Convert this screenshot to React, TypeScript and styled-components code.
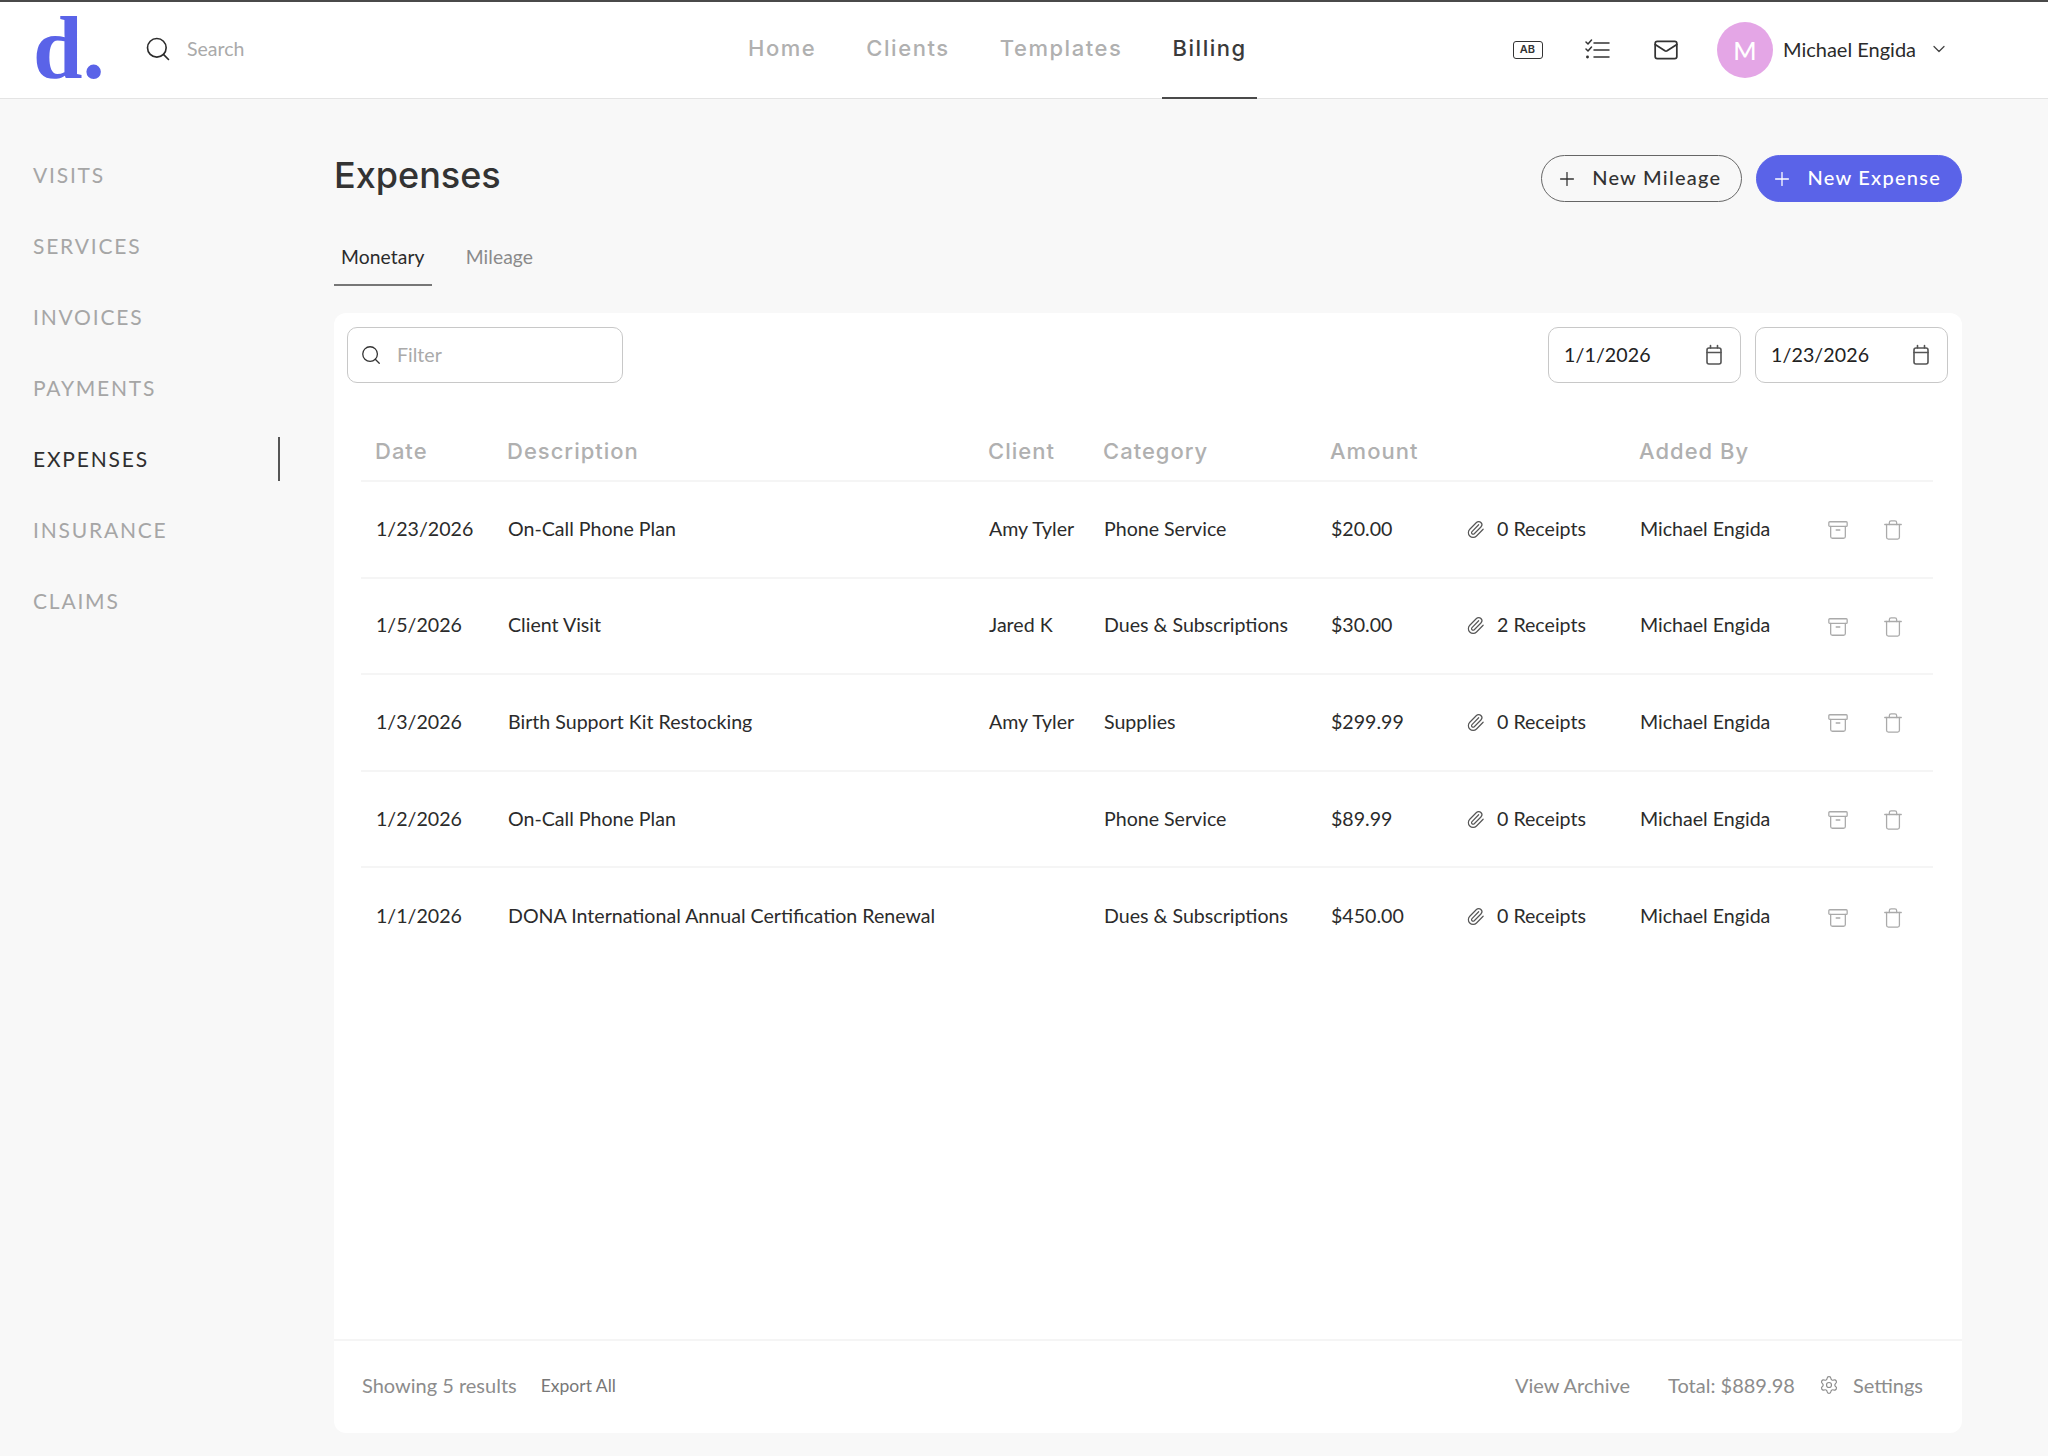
import React from 'react';
import styled, { createGlobalStyle } from 'styled-components';
import { Archive, ChevronDown, Mail, Paperclip, Plus, Search, Settings, Trash } from 'lucide-react';

const GlobalStyle = createGlobalStyle`
  * { box-sizing: border-box; }
  html, body { margin: 0; padding: 0; background: #f8f8f8; }
  body { font-family: 'Lato', 'Liberation Sans', sans-serif; color: #2b2b2b; }
`;

const Page = styled.div`
  width: 2048px;
  height: 1456px;
  display: flex;
  flex-direction: column;
  overflow: hidden;
`;

const Header = styled.header`
  height: 99px;
  flex: none;
  display: flex;
  align-items: stretch;
  background: #fff;
  border-top: 2px solid #4a4a4a;
  border-bottom: 1px solid #e4e4e4;
`;

const Logo = styled.div`
  width: 144px;
  padding: 0 0 0 33px;
  font-family: 'Liberation Serif', serif;
  font-weight: 700;
  font-size: 89px;
  line-height: 92px;
  letter-spacing: 0;
  color: #5a63e8;
`;

const SearchBox = styled.div`
  width: 594px;
  display: flex;
  align-items: center;
  gap: 15px;
  padding-bottom: 3px;
  color: #aaa;
  font-size: 19.5px;
  svg { color: #2b2b2b; }
`;

const Nav = styled.nav`
  display: flex;
  width: 755px;
`;

const NavLink = styled.a<{ $active?: boolean }>`
  display: flex;
  align-items: center;
  padding: 0 10px 4px;
  margin-right: 30px;
  margin-bottom: -1px;
  font-family: 'Inter', sans-serif;
  font-size: 22px;
  font-weight: 500;
  letter-spacing: 1.55px;
  color: ${(p) => (p.$active ? '#3a3a3a' : '#b0b0b0')};
  border-bottom: 2px solid ${(p) => (p.$active ? '#4a4a4a' : 'transparent')};
`;

const HeaderTools = styled.div`
  display: flex;
  align-items: center;
  flex: 1;
  color: #333;
`;

const ToolIcon = styled.span`
  width: 69px;
  display: flex;
  justify-content: center;
`;

const AbBadge = styled.span`
  width: 30px;
  height: 18px;
  border: 1.5px solid #333;
  border-radius: 3px;
  font-family: 'Inter', sans-serif;
  font-size: 11px;
  font-weight: 600;
  line-height: 15px;
  text-align: center;
`;

const Avatar = styled.span`
  width: 56px;
  height: 56px;
  margin-left: 17px;
  border-radius: 50%;
  background: #e4a6e6;
  color: #fff;
  font-size: 25px;
  font-weight: 500;
  display: flex;
  align-items: center;
  justify-content: center;
`;

const UserName = styled.span`
  margin-left: 10px;
  padding-bottom: 3px;
  font-size: 20px;
  color: #2b2b2b;
`;

const UserCaret = styled(ChevronDown)`
  margin-left: 13px;
  margin-bottom: 2px;
  color: #444;
`;

const Body = styled.div`
  flex: 1;
  display: flex;
`;

const Sidebar = styled.aside`
  width: 334px;
  flex: none;
  padding-top: 40px;
`;

const SideItem = styled.a<{ $active?: boolean }>`
  position: relative;
  display: flex;
  align-items: center;
  height: 71px;
  padding-left: 33px;
  font-size: 21px;
  letter-spacing: 1.8px;
  color: ${(p) => (p.$active ? '#2f2f2f' : '#a6a6a6')};
  &::after {
    content: '';
    display: ${(p) => (p.$active ? 'block' : 'none')};
    position: absolute;
    left: 278px;
    top: 14px;
    width: 2px;
    height: 44px;
    background: #555;
  }
`;

const Main = styled.main`
  width: 1628px;
  padding-top: 56px;
  display: flex;
  flex-direction: column;
`;

const TitleRow = styled.div`
  display: flex;
  align-items: center;
  height: 47px;
  gap: 14px;
`;

const Title = styled.h1`
  margin: 0 auto 8px 0;
  font-family: 'Inter', sans-serif;
  font-size: 36px;
  font-weight: 500;
  color: #333;
`;

const PillButton = styled.button<{ $primary?: boolean }>`
  height: 47px;
  display: flex;
  align-items: center;
  gap: 14px;
  padding: 0 20px 3px 14px;
  border-radius: 24px;
  border: 1px solid ${(p) => (p.$primary ? '#5a63e8' : '#666')};
  background: ${(p) => (p.$primary ? '#5a63e8' : 'transparent')};
  color: ${(p) => (p.$primary ? '#fff' : '#333')};
  font-family: inherit;
  font-size: 20px;
  font-weight: 500;
  letter-spacing: 1.25px;
  svg { margin-top: 3px; }
`;

const Tabs = styled.div`
  display: flex;
  height: 84px;
  padding-top: 32px;
`;

const Tab = styled.a<{ $active?: boolean }>`
  height: 52px;
  padding: 11px 7px 0;
  margin-right: 27px;
  font-size: 19.3px;
  letter-spacing: 0.1px;
  color: ${(p) => (p.$active ? '#2b2b2b' : '#8a8a8a')};
  border-bottom: 2px solid ${(p) => (p.$active ? '#777' : 'transparent')};
`;

const Card = styled.section`
  margin-top: 27px;
  height: 1120px;
  background: #fff;
  border-radius: 12px;
  display: flex;
  flex-direction: column;
`;

const Toolbar = styled.div`
  display: flex;
  gap: 14px;
  padding: 14px 14px 0 13px;
`;

const Field = styled.div<{ $width: number }>`
  width: ${(p) => p.$width}px;
  height: 56px;
  display: flex;
  align-items: center;
  border: 1px solid #c8c8c8;
  border-radius: 10px;
  background: #fff;
  font-size: 19.6px;
  padding: 0 16px 0 15px;
`;

const FilterField = styled(Field)`
  margin-right: auto;
  gap: 15px;
  padding: 0 12px 2px;
  color: #aaa;
  svg { color: #333; margin-top: 2px; }
`;

const DateValue = styled.span`
  flex: 1;
  padding-bottom: 2px;
  color: #222;
  letter-spacing: 0.1px;
`;

const Table = styled.div`
  margin: 35px 29px 0 27px;
  flex: 1;
`;

const Columns = styled.div`
  display: grid;
  grid-template-columns: 147px 481px 115px 227px 135px 174px 175px 1fr;
  align-items: center;
`;

const HeadRow = styled(Columns)`
  height: 64px;
  padding-top: 3px;
  border-bottom: 2px solid #f5f5f5;
`;

const HeadCell = styled.div<{ $span?: number }>`
  ${(p) => (p.$span ? `grid-column: span ${p.$span};` : '')}
  margin-left: -1px;
  font-family: 'Inter', sans-serif;
  font-size: 22px;
  font-weight: 500;
  letter-spacing: 1px;
  color: #b0b0b0;
`;

const DateHead = styled(HeadCell)`
  margin-left: 0;
  padding-left: 14px;
`;

const Row = styled(Columns)`
  height: 96.6px;
  border-bottom: 2px solid #f5f5f5;
  &:last-child { border-bottom: 0; }
`;

const Cell = styled.div`
  padding-bottom: 2px;
  font-size: 19.6px;
  color: #2b2b2b;
  white-space: nowrap;
`;

const DateCell = styled(Cell)`
  padding-left: 15px;
`;

const Receipts = styled(Cell)`
  display: flex;
  align-items: center;
  gap: 12px;
  svg { color: #555; margin-top: 2px; }
`;

const Actions = styled.div`
  display: flex;
  align-items: center;
  gap: 33px;
  padding: 2px 0 0 12px;
  color: #aaa;
`;

const Footer = styled.footer`
  height: 94px;
  flex: none;
  display: flex;
  align-items: center;
  padding: 0 39px 4px 28px;
  border-top: 2px solid #f5f5f5;
  font-size: 20px;
  color: #8c8c8c;
`;

const Results = styled.span`
  margin-right: 24px;
`;

const ExportLink = styled.a`
  font-size: 17.5px;
  color: #777;
  margin-right: auto;
`;

const FooterItem = styled.span`
  margin-left: 38px;
`;

const SettingsLink = styled.span`
  display: flex;
  align-items: center;
  gap: 14px;
  margin-left: 24px;
`;

const ChecklistGlyph: React.FC = () => (
  <svg width="26" height="22" viewBox="0 0 26 22" fill="none" stroke="currentColor" strokeWidth="1.5" strokeLinecap="round" strokeLinejoin="round">
    <path d="M10 4h15M10 11h15M10 18h15" />
    <path d="M2 3l2 2 3.5-4M2 10l2 2 3.5-4" />
    <circle cx="3.5" cy="18" r="0.7" />
  </svg>
);

const CalendarGlyph: React.FC = () => (
  <svg width="20" height="22" viewBox="0 0 20 22" fill="none" stroke="#555" strokeWidth="1.6" strokeLinecap="round">
    <rect x="3" y="4" width="14" height="16" rx="2" />
    <path d="M3 8.5h14M6.5 1.5v2.5M13.5 1.5v2.5" />
  </svg>
);

const navItems = ['Home', 'Clients', 'Templates', 'Billing'];
const sideItems = ['VISITS', 'SERVICES', 'INVOICES', 'PAYMENTS', 'EXPENSES', 'INSURANCE', 'CLAIMS'];

const expenses = [
  { date: '1/23/2026', description: 'On-Call Phone Plan', client: 'Amy Tyler', category: 'Phone Service', amount: '$20.00', receipts: 0 },
  { date: '1/5/2026', description: 'Client Visit', client: 'Jared K', category: 'Dues & Subscriptions', amount: '$30.00', receipts: 2 },
  { date: '1/3/2026', description: 'Birth Support Kit Restocking', client: 'Amy Tyler', category: 'Supplies', amount: '$299.99', receipts: 0 },
  { date: '1/2/2026', description: 'On-Call Phone Plan', client: '', category: 'Phone Service', amount: '$89.99', receipts: 0 },
  { date: '1/1/2026', description: 'DONA International Annual Certification Renewal', client: '', category: 'Dues & Subscriptions', amount: '$450.00', receipts: 0 },
];

const App: React.FC = () => (
  <Page>
    <GlobalStyle />
    <Header>
      <Logo>d.</Logo>
      <SearchBox>
        <Search size={28} strokeWidth={1.4} />
        Search
      </SearchBox>
      <Nav>
        {navItems.map((item) => (
          <NavLink key={item} $active={item === 'Billing'}>{item}</NavLink>
        ))}
      </Nav>
      <HeaderTools>
        <ToolIcon><AbBadge>AB</AbBadge></ToolIcon>
        <ToolIcon><ChecklistGlyph /></ToolIcon>
        <ToolIcon><Mail size={26} strokeWidth={1.6} /></ToolIcon>
        <Avatar>M</Avatar>
        <UserName>Michael Engida</UserName>
        <UserCaret size={20} strokeWidth={1.5} />
      </HeaderTools>
    </Header>
    <Body>
      <Sidebar>
        {sideItems.map((item) => (
          <SideItem key={item} $active={item === 'EXPENSES'}>{item}</SideItem>
        ))}
      </Sidebar>
      <Main>
        <TitleRow>
          <Title>Expenses</Title>
          <PillButton><Plus size={22} strokeWidth={1.4} />New Mileage</PillButton>
          <PillButton $primary><Plus size={22} strokeWidth={1.4} />New Expense</PillButton>
        </TitleRow>
        <Tabs>
          <Tab $active>Monetary</Tab>
          <Tab>Mileage</Tab>
        </Tabs>
        <Card>
          <Toolbar>
            <FilterField $width={276}>
              <Search size={22} strokeWidth={1.4} />
              Filter
            </FilterField>
            <Field $width={193}>
              <DateValue>1/1/2026</DateValue>
              <CalendarGlyph />
            </Field>
            <Field $width={193}>
              <DateValue>1/23/2026</DateValue>
              <CalendarGlyph />
            </Field>
          </Toolbar>
          <Table>
            <HeadRow>
              <DateHead>Date</DateHead>
              <HeadCell>Description</HeadCell>
              <HeadCell>Client</HeadCell>
              <HeadCell>Category</HeadCell>
              <HeadCell $span={2}>Amount</HeadCell>
              <HeadCell>Added By</HeadCell>
            </HeadRow>
            {expenses.map((row) => (
              <Row key={row.date}>
                <DateCell>{row.date}</DateCell>
                <Cell>{row.description}</Cell>
                <Cell>{row.client}</Cell>
                <Cell>{row.category}</Cell>
                <Cell>{row.amount}</Cell>
                <Receipts>
                  <Paperclip size={19} strokeWidth={1.5} />
                  {row.receipts} Receipts
                </Receipts>
                <Cell>Michael Engida</Cell>
                <Actions>
                  <Archive size={22} strokeWidth={1.4} />
                  <Trash size={22} strokeWidth={1.4} />
                </Actions>
              </Row>
            ))}
          </Table>
          <Footer>
            <Results>Showing 5 results</Results>
            <ExportLink>Export All</ExportLink>
            <FooterItem>View Archive</FooterItem>
            <FooterItem>Total: $889.98</FooterItem>
            <SettingsLink><Settings size={20} strokeWidth={1.4} />Settings</SettingsLink>
          </Footer>
        </Card>
      </Main>
    </Body>
  </Page>
);

export default App;
